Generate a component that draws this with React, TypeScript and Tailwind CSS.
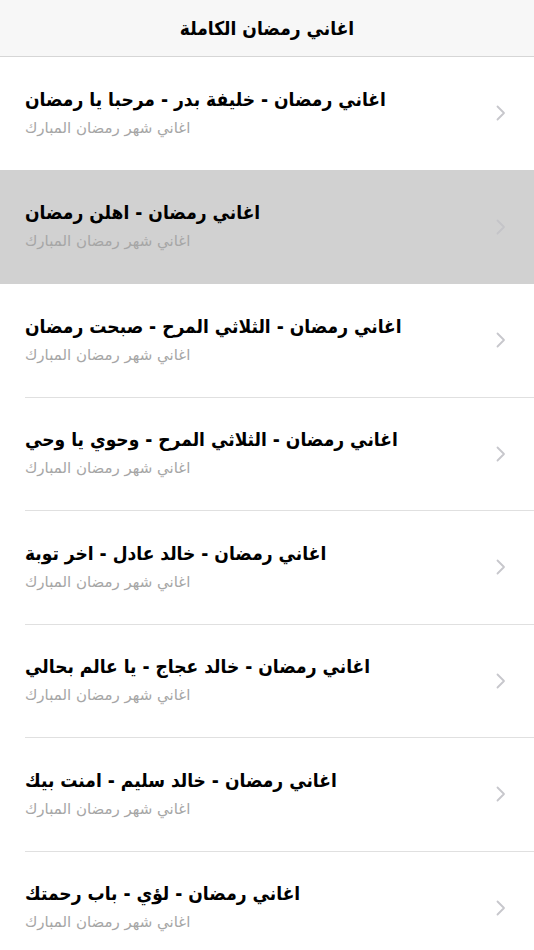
import React from "react";

const items = [
  "اغاني رمضان - خليفة بدر - مرحبا يا رمضان",
  "اغاني رمضان - اهلن رمضان",
  "اغاني رمضان - الثلاثي المرح - صبحت رمضان",
  "اغاني رمضان - الثلاثي المرح - وحوي يا وحي",
  "اغاني رمضان - خالد عادل - اخر توبة",
  "اغاني رمضان - خالد عجاج - يا عالم بحالي",
  "اغاني رمضان - خالد سليم - امنت بيك",
  "اغاني رمضان - لؤي - باب رحمتك",
];

function Chevron({ faded }: { faded?: boolean }) {
  return (
    <svg width="10" height="16" viewBox="0 0 10 16" fill="none">
      <path
        d="M1.5 1.5 L8 8 L1.5 14.5"
        stroke={faded ? "#c4c4c8" : "#c7c7cc"}
        strokeWidth="1.8"
        strokeLinecap="round"
        strokeLinejoin="round"
      />
    </svg>
  );
}

const cond = { fontFamily: '"DejaVu Sans Condensed", "DejaVu Sans", sans-serif' };

export default function App() {
  return (
    <div
      className="w-[534px] h-[950px] overflow-hidden bg-white"
      style={{ fontFamily: '"DejaVu Sans", "Noto Sans", sans-serif' }}
    >
      <div className="h-[57px] bg-[#f7f7f7] border-b border-[#d6d6d6] flex items-center justify-center">
        <span className="text-[19px] font-bold text-black" dir="rtl" style={cond}>
          اغاني رمضان الكاملة
        </span>
      </div>
      {items.map((t, i) => (
        <div
          key={i}
          className={`h-[113.5px] flex flex-col ${i === 1 ? "bg-[#d1d1d1]" : "bg-white"}`}
        >
          <div className="flex-1 flex items-center pl-[25px] pr-[28px]">
            <div className="flex-1 flex flex-col items-start">
              <div
                dir="rtl"
                className="text-[19px] font-bold text-black leading-[28px] -mt-[2px]"
                style={cond}
              >
                {t}
              </div>
              <div dir="rtl" className="text-[15px] text-[#a6a6a6] leading-[24px] mt-[3px]">
                اغاني شهر رمضان المبارك
              </div>
            </div>
            <Chevron faded={i === 1} />
          </div>
          {i !== 0 && i !== 1 ? (
            <div className="h-px bg-[#e0e0e0] ml-[25px]" />
          ) : (
            <div className="h-px bg-[#d1d1d1]" />
          )}
        </div>
      ))}
    </div>
  );
}
